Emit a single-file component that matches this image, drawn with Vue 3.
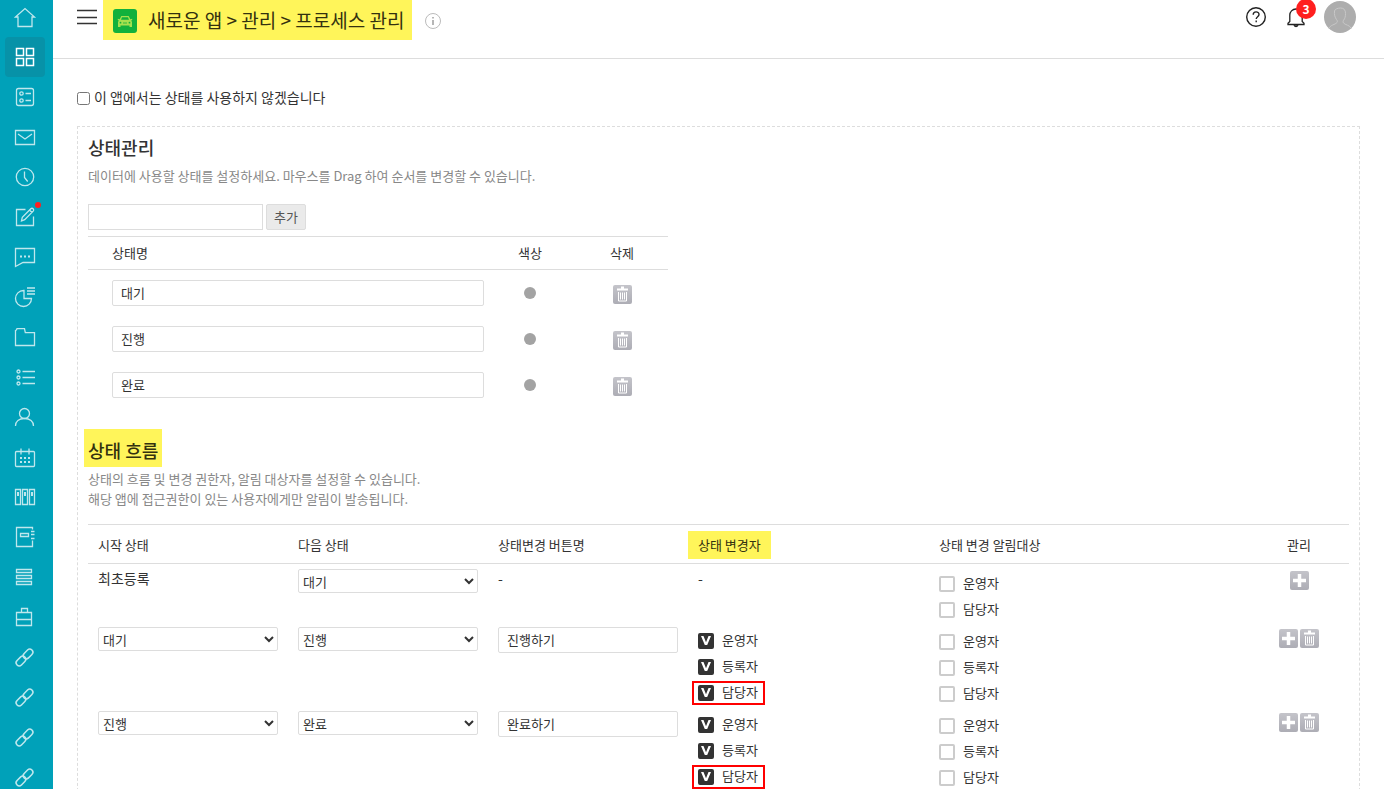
<script setup>
import { ref } from 'vue'

const navItems = [
  { name: '홈', icon: 'home' },
  { name: '앱', icon: 'grid', active: true },
  { name: '설문', icon: 'form' },
  { name: '메일', icon: 'mail' },
  { name: '근태', icon: 'clock' },
  { name: '전자결재', icon: 'edit', dot: true },
  { name: '메신저', icon: 'chat' },
  { name: '보고', icon: 'pie' },
  { name: '자료실', icon: 'folder' },
  { name: '할 일', icon: 'list' },
  { name: '주소록', icon: 'user' },
  { name: '캘린더', icon: 'calendar' },
  { name: '문서관리', icon: 'binders' },
  { name: '노트', icon: 'note' },
  { name: '게시판', icon: 'rows' },
  { name: '예약', icon: 'case' },
  { name: '링크 1', icon: 'link' },
  { name: '링크 2', icon: 'link' },
  { name: '링크 3', icon: 'link' },
  { name: '링크 4', icon: 'link' }
]

const icons = {
  home: '<path d="M2.5 12 12 3.500 21.500 12H19v9.500H5V12z"/>',
  grid: '<path d="M3.500 3.500h7v7h-7zM13.500 3.500h7v7h-7zM3.500 13.500h7v7h-7zM13.500 13.500h7v7h-7z"/>',
  form: '<rect x="3.500" y="3.500" width="17" height="17" rx="2"/><circle cx="8.500" cy="8.500" r="1.700"/><circle cx="8.500" cy="15.500" r="1.700"/><path d="M12.500 8.500H18M12.500 15.500H18"/>',
  mail: '<path d="M2.500 5.500h19v14h-19zM5 9l7 5 7-5"/>',
  clock: '<circle cx="12" cy="12" r="8.700"/><path d="M11.500 6.500v6l3.200 4"/>',
  edit: '<path d="M12.500 4.500h-9v16h17v-9M8.500 16l.8-3.800 8.500-8.500q1.200-1 2.300 0 1.200 1.200.1 2.400l-8.500 8.500zM16.500 5l2.500 2.500"/>',
  chat: '<path d="M2.500 3.500h19v14H10l-7.500 4z"/><path d="M7 11.500h2M11 11.500h2M15 11.500h2" stroke-width="2"/>',
  pie: '<path d="M10.500 5.500a8 8 0 1 0 8 8h-7.500v-8z"/><path d="M14 3h8M14 6h8M14 9h8" stroke-width="1.700"/>',
  folder: '<path d="M2.500 5.500q1-.3 1.500-1.800h7.500l.8 4h9.200v12.800h-19z"/>',
  list: '<circle cx="5.500" cy="6.500" r="1.500"/><circle cx="5.500" cy="12.500" r="1.500"/><circle cx="5.500" cy="18.500" r="1.500"/><path d="M9.500 6.500H22M9.500 12.500H22M9.500 18.500H22"/>',
  user: '<circle cx="11.500" cy="8.500" r="5"/><path d="M2.500 21c0-4.500 3.500-7.500 9-7.500s9 3 9 7.500"/>',
  calendar: '<rect x="2.500" y="6.500" width="19" height="15" rx="1"/><path d="M8 3.500v6M16 3.500v6"/><path d="M7 13h2M11 13h2M15 13h2M7 17h2M11 17h2M15 17h2" stroke-width="2"/>',
  binders: '<path d="M2.500 4.500h5v15h-5zM9.500 4.500h5v15h-5zM16.500 4.500h5v15h-5z"/><path d="M5 7v4M12 7v4M19 7v4" stroke-width="2"/>',
  note: '<path d="M19.500 4.500v-2h-16v19h16v-6M7.500 8.500h8v3h-8zM18 6.500h3.500M18 9.500h3.500M18 13.500h3.500"/>',
  rows: '<path d="M3.500 4.500h15v3h-15zM3.500 10.500h15v3h-15zM3.500 16.500h15v3h-15z"/>',
  case: '<path d="M3.500 7.500h15v13h-15zM8.500 7.500v-4h6v4M3.500 14.500h15"/>',
  link: '<g transform="rotate(-45 11.500 12.500)" stroke-width="1.500"><rect x="1" y="9.400" width="11" height="6.200" rx="3.100"/><rect x="11" y="9.400" width="11" height="6.200" rx="3.100"/></g>'
}

const disabled = ref(false)
const newState = ref('')
const states = ref(['대기', '진행', '완료'])

const group = (names, checked) => names.map((name) => ({ name, checked }))
const all = ['운영자', '등록자', '담당자']

const flows = ref([
  { first: true, from: '', to: '대기', action: '', actors: [], targets: group(['운영자', '담당자'], false) },
  { from: '대기', to: '진행', action: '진행하기', actors: group(all, true), targets: group(all, false) },
  { from: '진행', to: '완료', action: '완료하기', actors: group(all, true), targets: group(all, false) }
])

function addState() {
  const name = newState.value.trim()
  if (name) states.value.push(name)
  newState.value = ''
}
</script>

<template>
  <div class="app">
    <nav class="sidebar" aria-label="주 메뉴">
      <a
        v-for="(item, i) in navItems"
        :key="i"
        href="#"
        class="nav-item"
        :class="{ active: item.active }"
        :aria-label="item.name"
      >
        <svg viewBox="0 0 24 24" v-html="icons[item.icon]"></svg>
        <span v-if="item.dot" class="nav-dot"></span>
      </a>
    </nav>

    <div class="main">
      <header class="topbar">
        <button class="icon-btn menu" aria-label="메뉴">
          <svg width="20" height="16" viewBox="0 0 20 16"><path d="M0 1.500h20M0 8.500h20M0 14.500h20" stroke="#333" stroke-width="1.500" /></svg>
        </button>
        <h1 class="title">
          <svg class="app-icon" viewBox="0 0 24 24">
            <rect width="24" height="24" rx="3" fill="#12b13c" />
            <path d="M8.300 7h7.400l1.600 3.300 1.900-.6v1.300l-1 .6.800 1.400V18h-2.500v-1.500h-9V18H5v-5l.8-1.400-1-.6V9.700l1.900.6z" fill="#a5e04e" />
            <path d="M9 8.300h6l1 2.500H8z" fill="#12b13c" />
            <circle cx="7.500" cy="13.700" r=".9" fill="#12b13c" /><circle cx="16.500" cy="13.700" r=".9" fill="#12b13c" />
            <path d="M10 14h4" stroke="#12b13c" stroke-width=".8" />
          </svg>
          <span>새로운 앱 &gt; 관리 &gt; 프로세스 관리</span>
        </h1>
        <button class="icon-btn info" aria-label="정보">
          <svg width="16" height="16" viewBox="0 0 16 16"><circle cx="8" cy="8" r="7.500" fill="none" stroke="#bbb" /><path d="M8 7v5M8 4v1.500" stroke="#aaa" stroke-width="1.700" /></svg>
        </button>
        <div class="tools">
          <button class="icon-btn" aria-label="도움말">
            <svg width="22" height="22" viewBox="0 0 22 22" fill="none" stroke="#222" stroke-width="1.400"><circle cx="11" cy="11" r="9.300" /><path d="M8.200 8.800c0-3.800 5.800-3.800 5.800-.3 0 2.200-2.800 2.200-2.800 4.500M11.200 14.500v1.700" /></svg>
          </button>
          <button class="icon-btn bell" aria-label="알림 3개">
            <svg width="20" height="22" viewBox="0 0 20 22" fill="none" stroke="#222" stroke-width="1.300"><path d="M2 18.500h16v-1.300l-1.800-1.700V9c0-3-2.500-6-6.200-6S3.800 6 3.800 9v6.500L2 17.200z" /><path d="M8 19.200c.5 1.800 3.500 1.800 4 0" fill="#222" /></svg>
            <span class="badge">3</span>
          </button>
          <button class="icon-btn avatar" aria-label="내 프로필">
            <svg width="32" height="32" viewBox="0 0 32 32"><circle cx="16" cy="16" r="16" fill="#adadad" /><path d="M5 27.500c1.500-4 6-3.500 8-6 .6-1 .4-2-.5-3-1.500-2-2.500-5-2-8.500.4-2 3.500-3 6-3 3.500 0 5 2 5 5.500 0 3-.5 5-1.800 6.500-.7 1-.8 2-.2 3 1.500 2 6.500 2 7.800 5.500" fill="none" stroke="#c8c8c8" /></svg>
          </button>
        </div>
      </header>

      <main class="content">
        <label class="toggle"><input v-model="disabled" type="checkbox" />이 앱에서는 상태를 사용하지 않겠습니다</label>

        <div class="panel">
          <section>
            <h2>상태관리</h2>
            <p class="desc">데이터에 사용할 상태를 설정하세요. 마우스를 Drag 하여 순서를 변경할 수 있습니다.</p>
            <form class="adder" @submit.prevent="addState">
              <input v-model="newState" type="text" class="text new-state" aria-label="새 상태명" />
              <button class="add">추가</button>
            </form>
            <table class="states">
              <thead>
                <tr><th class="name">상태명</th><th>색상</th><th>삭제</th></tr>
              </thead>
              <tbody>
                <tr v-for="(s, i) in states" :key="i">
                  <td class="name"><input v-model="states[i]" type="text" class="text" aria-label="상태명" /></td>
                  <td><button class="color" aria-label="색상"></button></td>
                  <td>
                    <button class="tile" aria-label="삭제" @click="states.splice(i, 1)">
                      <svg viewBox="0 0 19 19"><path d="M4 4.500h11M8 2.500h3" /><path d="M5.500 7v9h8V7M7.500 7.500v7M9.500 7.500v7M11.500 7.500v7" stroke-width="1" /></svg>
                    </button>
                  </td>
                </tr>
              </tbody>
            </table>
          </section>

          <section class="flow">
            <h2 class="marked">상태 흐름</h2>
            <p class="desc">상태의 흐름 및 변경 권한자, 알림 대상자를 설정할 수 있습니다.<br />해당 앱에 접근권한이 있는 사용자에게만 알림이 발송됩니다.</p>
            <table class="flows">
              <colgroup>
                <col class="c-field" /><col class="c-field" /><col class="c-field" /><col class="c-actor" /><col /><col class="c-manage" />
              </colgroup>
              <thead>
                <tr>
                  <th>시작 상태</th>
                  <th>다음 상태</th>
                  <th>상태변경 버튼명</th>
                  <th class="mark-cell"><span class="mark">상태 변경자</span></th>
                  <th>상태 변경 알림대상</th>
                  <th class="manage">관리</th>
                </tr>
              </thead>
              <tbody>
                <tr v-for="(f, i) in flows" :key="i">
                  <td>
                    <div v-if="f.first" class="plain">최초등록</div>
                    <select v-else v-model="f.from" aria-label="시작 상태"><option v-for="s in states" :key="s">{{ s }}</option></select>
                  </td>
                  <td>
                    <select v-model="f.to" aria-label="다음 상태"><option v-for="s in states" :key="s">{{ s }}</option></select>
                  </td>
                  <td>
                    <div v-if="f.first" class="plain">-</div>
                    <input v-else v-model="f.action" type="text" class="text" aria-label="상태변경 버튼명" />
                  </td>
                  <td>
                    <div v-if="f.first" class="plain">-</div>
                    <div v-else class="checks actors">
                      <label v-for="a in f.actors" :key="a.name" class="check" :class="{ boxed: a.name === '담당자' }"><input v-model="a.checked" type="checkbox" />{{ a.name }}</label>
                    </div>
                  </td>
                  <td>
                    <div class="checks targets">
                      <label v-for="t in f.targets" :key="t.name" class="check"><input v-model="t.checked" type="checkbox" />{{ t.name }}</label>
                    </div>
                  </td>
                  <td class="manage">
                    <div class="tiles">
                      <button class="tile" aria-label="추가">
                        <svg viewBox="0 0 19 19"><path d="M9.500 3v13M3 9.500h13" stroke-width="3.500" /></svg>
                      </button>
                      <button v-if="!f.first" class="tile" aria-label="삭제">
                        <svg viewBox="0 0 19 19"><path d="M4 4.500h11M8 2.500h3" /><path d="M5.500 7v9h8V7M7.500 7.500v7M9.500 7.500v7M11.500 7.500v7" stroke-width="1" /></svg>
                      </button>
                    </div>
                  </td>
                </tr>
              </tbody>
            </table>
          </section>
        </div>
      </main>
    </div>
  </div>
</template>

<style>
body {
  margin: 0;
  overflow: hidden;
}
</style>

<style scoped>
.app {
  display: flex;
  height: 100vh;
  overflow: hidden;
  background: #fff;
  color: #333;
  font: 13px/20px "Noto Sans CJK KR", sans-serif;
}
.app *,
.app *::before,
.app *::after {
  box-sizing: border-box;
}
button,
input,
select {
  margin: 0;
  padding: 0;
  font: inherit;
  color: inherit;
}
h1,
h2,
p {
  margin: 0;
}

.sidebar {
  flex: none;
  width: 53px;
  overflow: hidden;
  background: #00a1b9;
}
.nav-item {
  position: relative;
  display: flex;
  align-items: center;
  justify-content: center;
  width: 40px;
  height: 40px;
  margin-left: 5px;
  border-radius: 4px;
}
.nav-item:first-child {
  margin-top: -3px;
}
.nav-item svg {
  width: 24px;
  height: 24px;
  fill: none;
  stroke: #fff;
  stroke-width: 1.3;
  opacity: 0.75;
}
.nav-item.active {
  background: #0792a8;
}
.nav-item.active svg {
  opacity: 1;
  stroke-width: 1.5;
}
.nav-dot {
  position: absolute;
  top: 5px;
  right: 4px;
  width: 6px;
  height: 6px;
  border-radius: 50%;
  background: #ff1f1f;
}

.main {
  flex: 1;
  min-width: 0;
}
.topbar {
  display: flex;
  align-items: flex-start;
  height: 59px;
  padding: 0 28px 0 24px;
  border-bottom: 1px solid #ddd;
}
.icon-btn {
  display: block;
  border: 0;
  background: none;
}
.icon-btn svg {
  display: block;
}
.menu {
  margin: 9px 6px 0 0;
}
.title {
  display: flex;
  align-items: center;
  gap: 11px;
  height: 40px;
  padding: 0 8px 0 10px;
  background: #fff55a;
  color: #33310f;
  font-size: 19px;
  font-weight: 400;
  white-space: nowrap;
}
.app-icon {
  width: 24px;
  height: 24px;
  margin-top: 2px;
}
.info {
  margin: 13px 0 0 13px;
}
.tools {
  display: flex;
  align-items: center;
  gap: 18px;
  height: 34px;
  margin-left: auto;
}
.bell {
  position: relative;
  margin: 0 0 0 1px;
}
.badge {
  position: absolute;
  top: -7px;
  right: -10px;
  width: 20px;
  height: 20px;
  border-radius: 50%;
  background: #ff1f1f;
  color: #fff;
  font-size: 12px;
  font-weight: 700;
}

.content {
  padding: 29px 24px 0;
}
.toggle {
  display: flex;
  align-items: flex-start;
  gap: 4px;
  margin-bottom: 20px;
  font-size: 14px;
  line-height: 18px;
}
.toggle input {
  width: 13px;
  height: 13px;
  margin-top: 4px;
}
.panel {
  padding: 10px;
  border: 1px dashed #ddd;
}
h2 {
  font-size: 18px;
  line-height: 20px;
  font-weight: 500;
}
.desc {
  margin-top: 9px;
  color: #888;
}
.text {
  display: block;
  width: 100%;
  height: 26px;
  padding: 0 8px 2px;
  border: 1px solid #ddd;
  border-radius: 2px;
  background: #fff;
}
.adder {
  display: flex;
  gap: 3px;
  margin: 18px 0 6px;
}
.new-state {
  width: 175px;
  border-radius: 0;
}
.add {
  width: 40px;
  height: 26px;
  border: 1px solid #ddd;
  border-radius: 2px;
  background: #eaeaea;
  color: #555;
}

table {
  border-collapse: separate;
  border-spacing: 0;
  table-layout: fixed;
}
th {
  padding: 0;
  border: solid #ddd;
  border-width: 1px 0;
  font-weight: 400;
}
.states {
  width: 580px;
}
.states th {
  width: 92px;
  height: 34px;
}
.states td {
  height: 46px;
  padding: 0;
  text-align: center;
}
.states .name {
  width: auto;
  padding-left: 24px;
  text-align: left;
}
.color {
  display: block;
  width: 12px;
  height: 12px;
  margin: 0 auto;
  border: 0;
  border-radius: 50%;
  background: #a3a3a3;
}
.tile {
  display: block;
  width: 19px;
  height: 19px;
  border: 0;
  border-radius: 2px;
  background: linear-gradient(#c4c4ca, #adadb5);
}
.tile svg {
  display: block;
  fill: none;
  stroke: #fff;
  stroke-width: 2;
}
.states .tile {
  margin: 2px auto 0;
}

.flow {
  margin-top: 21px;
}
.marked {
  width: max-content;
  margin-left: -4px;
  padding: 11px 4px 7px;
  background: #fff55a;
  color: #33310f;
}
.flow .desc {
  margin: 2px 0 15px;
}
.flows {
  width: 100%;
}
.c-field {
  width: 200px;
}
.c-actor {
  width: 241px;
}
.c-manage {
  width: 100px;
}
.flows th {
  height: 40px;
  padding: 2px 10px 0;
  text-align: left;
}
.flows th.mark-cell {
  padding: 2px 0 0;
}
.mark {
  display: inline-block;
  padding: 4px 10px;
  background: #fff55a;
  color: #33310f;
}
.flows td {
  padding: 5px 10px 0;
  vertical-align: top;
}
.plain {
  font-size: 14px;
  line-height: 18px;
}
select {
  display: block;
  width: 100%;
  height: 24px;
  border: 1px solid #ddd;
  border-radius: 2px;
  background: #fff;
}
.checks {
  display: flex;
  flex-direction: column;
  align-items: flex-start;
  gap: 10px;
  padding-bottom: 4px;
}
.actors {
  padding-top: 6px;
}
.targets {
  padding-top: 7px;
}
.check {
  position: relative;
  display: flex;
  align-items: flex-start;
  gap: 8px;
  line-height: 14px;
}
.check input {
  appearance: none;
  width: 16px;
  height: 16px;
  border: 2px solid #ccc;
  border-radius: 2px;
  background: #fff;
}
.check input:checked {
  padding: 1px;
  border-color: #333;
  background: #333;
}
.check input:checked::before {
  content: "";
  display: block;
  width: 10px;
  height: 9px;
  background: #fff;
  clip-path: polygon(0 0, 25% 0, 50% 70%, 75% 0, 100% 0, 62% 100%, 38% 100%);
}
.boxed::after {
  content: "";
  position: absolute;
  inset: -4px -7px -4px -6px;
  border: 2px solid #f00;
  pointer-events: none;
}
.flows .manage {
  padding-right: 0;
  padding-left: 0;
  text-align: center;
}
.tiles {
  display: flex;
  justify-content: center;
  gap: 2px;
  padding-top: 2px;
}
</style>
